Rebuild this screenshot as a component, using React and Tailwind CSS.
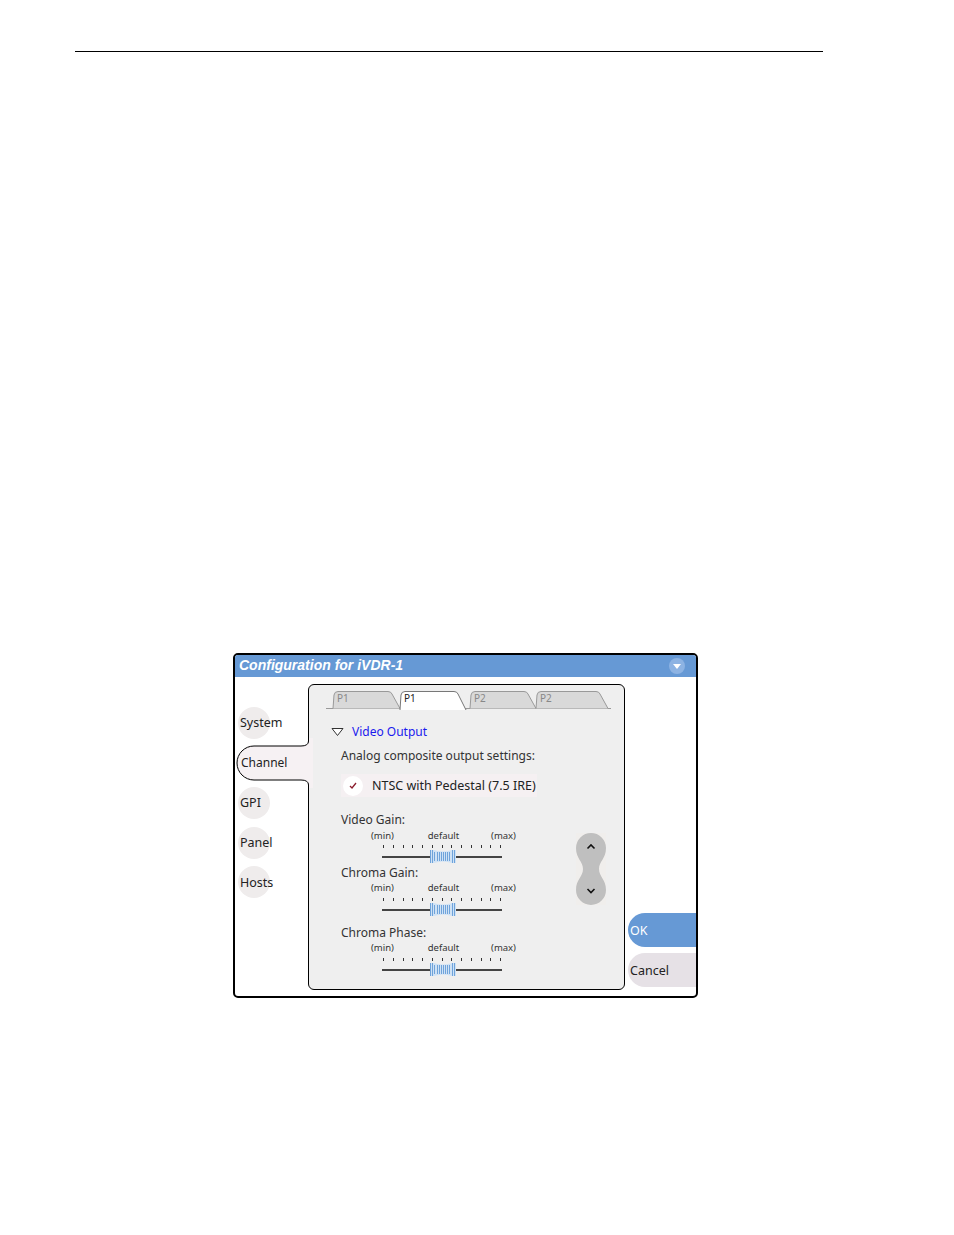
import React from 'react'

const ui = "font-['Noto_Sans',sans-serif]"

function SideItem({ label, mt, pt = '' }) {
  return (
    <div className={`${mt} ${pt} ml-[3px] w-[32px] h-[32px] rounded-full bg-[#efecec] flex items-center`}>
      <span className="ml-[2px] text-[12.5px] leading-none text-[#222] whitespace-nowrap">{label}</span>
    </div>
  )
}

function ChannelTab() {
  return (
    <div className="relative mt-[7px] h-[34px] flex items-center">
      <svg className="absolute left-0 top-[-8px]" width="78" height="50" viewBox="0 0 78 50">
        <path d="M73.5 0V3Q73.5 8 66 8H19A17 17 0 0 0 19 42H66Q73.5 42 73.5 47V50H78V0Z" fill="#f6f1f3" />
        <path d="M73.5 0V3Q73.5 8 66 8H19A17 17 0 0 0 19 42H66Q73.5 42 73.5 47V50" fill="none" stroke="#000" />
      </svg>
      <span className="relative ml-[6px] text-[12px] leading-none text-[#222]">Channel</span>
    </div>
  )
}

function Tab({ label, active, width, ml }) {
  const w = width
  return (
    <div className={`relative h-[18px] ${ml} ${active ? 'z-10' : ''}`} style={{ width: w }}>
      <svg className="absolute left-0 top-0" width={w} height="19" viewBox={`0 0 ${w} 19`}>
        <path
          d={`M1 ${active ? 19 : 17.5}L2 4Q2.5 .5 6 .5H${w - 14}Q${w - 11} .5 ${w - 10} 3L${w - 2} ${active ? 19 : 17.5}`}
          fill={active ? '#ffffff' : '#d9d9d9'}
          stroke={active ? '#777' : '#999'}
        />
      </svg>
      <span className={`absolute left-[5px] top-[1px] text-[10px] leading-[12px] ${active ? 'text-[#222]' : 'text-[#888]'}`}>{label}</span>
    </div>
  )
}

function Slider({ label, mt, labelsMt, ticksMt }) {
  const ticks = Array.from({ length: 13 })
  return (
    <div className={mt}>
      <div className="h-[16px] flex items-center text-[12px] leading-none text-[#333]">{label}</div>
      <div className={`relative ml-[30px] ${labelsMt} w-[145px] h-[12px] flex justify-between items-center text-[9.5px] leading-none text-[#333]`}>
        <span>(min)</span>
        <span className="ml-[2px]">default</span>
        <span>(max)</span>
      </div>
      <div className={`ml-[41px] w-[120px] h-[6px] ${ticksMt} flex justify-between px-[1px]`}>
        {ticks.map((_, i) => (
          <div key={i} className="w-px h-[3px] bg-[#333]" />
        ))}
      </div>
      <div className="relative ml-[41px] w-[120px] h-[13px] mt-[-1px] flex items-center">
        <div className="w-full h-[2px] bg-[#444]" />
        <svg className="absolute left-[47px] top-0" width="28" height="13" viewBox="0 0 28 13">
          <path d="M1 0H5Q14 3 23 0H27V13H23Q14 10 5 13H1Z" fill="#cfe2f5" />
          {[1, 3, 5, 8, 10, 12, 14, 16, 18, 20, 23, 25].map(x => (
            <line key={x} x1={x + 0.5} x2={x + 0.5} y1={x > 4 && x < 23 ? 2 : 0} y2={x > 4 && x < 23 ? 11 : 13} stroke="#6fa3da" />
          ))}
        </svg>
      </div>
    </div>
  )
}

function Scroller() {
  return (
    <div className="mt-[90px] w-[30px] h-[72px] bg-[#f0eeec]">
      <svg width="30" height="72" viewBox="0 0 30 72">
        <path d="M15 0A15 15 0 0 1 30 15C30 26 23 28 23 36C23 44 30 46 30 57A15 15 0 0 1 0 57C0 46 7 44 7 36C7 28 0 26 0 15A15 15 0 0 1 15 0Z" fill="#bfbfbf" />
        <path d="M11.5 15.5L15 12L18.5 15.5" fill="none" stroke="#111" strokeWidth="1.6" />
        <path d="M11.5 56L15 59.5L18.5 56" fill="none" stroke="#111" strokeWidth="1.6" />
      </svg>
    </div>
  )
}

export default function App() {
  return (
    <div className={`${ui} w-[954px] h-[1235px] bg-white overflow-hidden`}>
      <div className="ml-[75px] mt-[51px] w-[748px] h-px bg-black" />

      {/* dialog */}
      <div className="ml-[233px] mt-[601px] w-[465px] h-[345px] border-2 border-black rounded-[5px] bg-white flex flex-col overflow-hidden">
        <div className="h-[22px] bg-[#6699d5] flex items-center justify-between pl-[3px] pr-[11px] shrink-0">
          <span className="mb-[2px] ml-[1px] font-['Liberation_Sans',sans-serif] text-[14px] font-bold italic text-white leading-none">Configuration for iVDR-1</span>
          <div className="w-[16px] h-[16px] rounded-full bg-[#8db3e3] flex items-center justify-center">
            <svg width="8" height="5" viewBox="0 0 8 5"><path d="M0 0H8L4 5Z" fill="#fff" /></svg>
          </div>
        </div>

        <div className="flex flex-1 min-h-0">
          {/* side tabs */}
          <div className="relative z-10 w-[73px] shrink-0 pt-[30px]">
            <SideItem label="System" mt="mt-0" />
            <ChannelTab />
            <SideItem label="GPI" mt="mt-[7px]" />
            <SideItem label="Panel" mt="mt-[8px]" />
            <SideItem label="Hosts" mt="mt-[7px]" pt="pt-[2px]" />
          </div>

          {/* main panel */}
          <div className="mt-[7px] mb-[6px] w-[317px] shrink-0 border border-black rounded-[6px] bg-[#efefef] pt-[6px]">
            <div className="relative ml-[17px] w-[285px] h-[18px] flex border-b border-[#999]">
              <Tab label="P1" width={70} ml="ml-[6px]" />
              <Tab label="P1" active width={69} ml="ml-[-3px]" />
              <Tab label="P2" width={69} ml="ml-[1px]" />
              <Tab label="P2" width={75} ml="ml-[-3px]" />
            </div>

            <div className="ml-[22px] mt-[12px] h-[22px] flex items-center">
              <svg width="13" height="8" viewBox="0 0 13 8"><path d="M1 .5H12L6.5 7.5Z" fill="#fff" stroke="#333" /></svg>
              <span className="ml-[8px] text-[12px] leading-none text-[#1a1aee]">Video Output</span>
            </div>

            <div className="pl-[32px] flex">
              <div className="w-[235px] shrink-0">
                <div className="mt-[3px] h-[20px] flex items-center text-[12px] leading-none text-[#333] whitespace-nowrap">Analog composite output settings:</div>
                <div className="mt-[8px] w-[196px] h-[23px] bg-[#f5f0f2] flex items-center">
                  <div className="ml-[2px] w-[20px] h-[20px] shrink-0 rounded-full bg-white flex items-center justify-center">
                    <svg width="8" height="7" viewBox="0 0 8 7"><path d="M1 4L3 6L7 1" fill="none" stroke="#8a1c2c" strokeWidth="1.3" /></svg>
                  </div>
                  <span className="ml-[9px] mt-[2px] text-[12.5px] leading-none text-[#222] whitespace-nowrap">NTSC with Pedestal (7.5 IRE)</span>
                </div>
                <Slider label="Video Gain:" mt="mt-[15px]" labelsMt="mt-[2px]" ticksMt="mt-[3px]" />
                <Slider label="Chroma Gain:" mt="mt-[2px]" labelsMt="mt-[1px]" ticksMt="mt-[4px]" />
                <Slider label="Chroma Phase:" mt="mt-[9px]" labelsMt="mt-[1px]" ticksMt="mt-[4px]" />
              </div>
              <Scroller />
            </div>
          </div>

          {/* ok / cancel */}
          <div className="flex-1 flex flex-col items-end justify-end pb-[9px]">
            <div className="w-[68px] h-[34px] rounded-l-full bg-[#6699d5] flex items-center pl-[2px] pt-[2px] text-[12.5px] leading-none text-white">OK</div>
            <div className="mt-[6px] w-[68px] h-[34px] rounded-l-full bg-[#e6e1e6] flex items-center pl-[2px] pt-[2px] text-[12.5px] leading-none text-[#222]">Cancel</div>
          </div>
        </div>
      </div>
    </div>
  )
}
